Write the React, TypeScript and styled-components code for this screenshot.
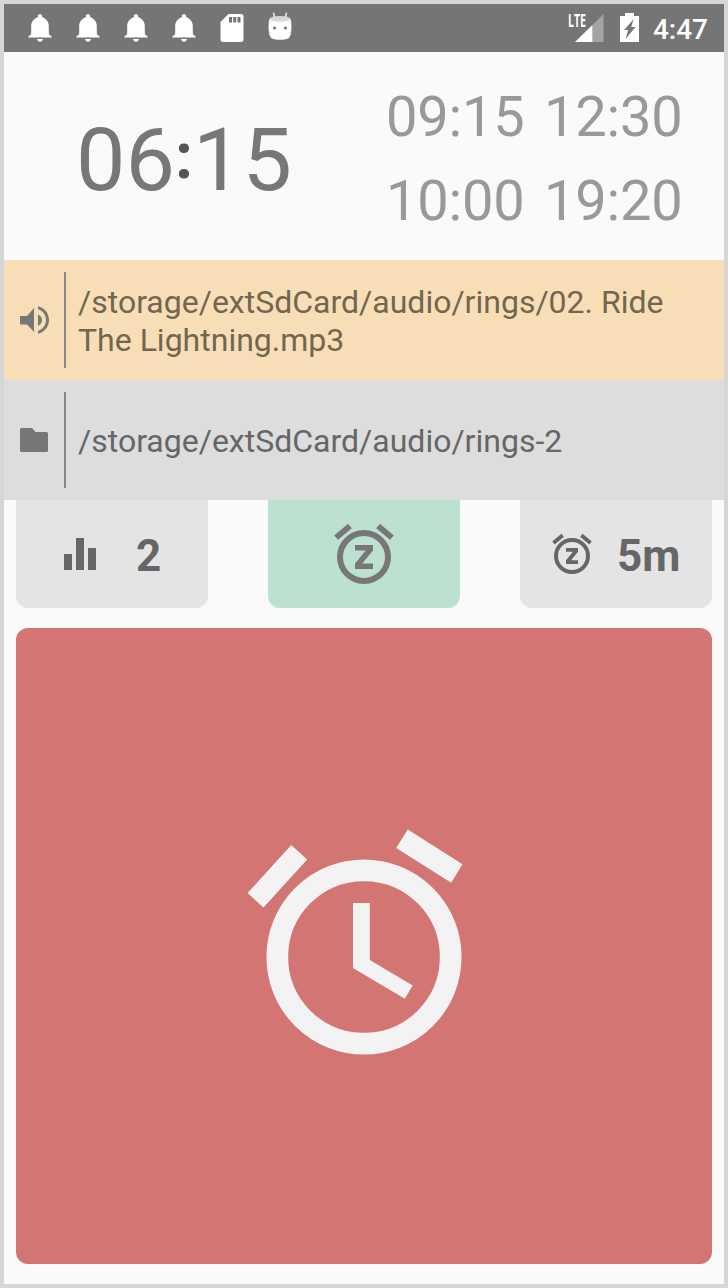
import React from 'react';
import styled, { createGlobalStyle } from 'styled-components';

const Global = createGlobalStyle`
  * { box-sizing: border-box; }
  body { margin: 0; background: #d6d6d6; font-family: Roboto, sans-serif; }
  svg { display: block; flex: none; }
`;

const Frame = styled.div`
  width: 728px;
  height: 1288px;
  border: 4px solid #d6d6d6;
  background: #fafafa;
  display: flex;
  flex-direction: column;
`;

const StatusBar = styled.header`
  height: 48px;
  background: #757575;
  color: #fff;
  display: flex;
  justify-content: space-between;
  padding: 0 16px 0 12px;
`;

const Notifications = styled.div`
  display: flex;
`;

const System = styled.div`
  display: flex;
`;

const StatusTime = styled.span`
  margin-left: 5px;
  font-size: 28px;
  font-weight: 500;
  line-height: 51px;
`;

const Times = styled.section`
  height: 208px;
  display: flex;
`;

const MainTime = styled.div`
  width: 360px;
  display: flex;
  justify-content: center;
  font-size: 88px;
  line-height: 216px;
  color: #777;
`;

const Colon = styled.span`
  font-size: 64px;
  font-weight: 700;
  line-height: 209px;
  color: #555;
`;

const OtherTimes = styled.div`
  display: grid;
  grid-template-columns: 158px 158px;
  grid-auto-rows: 84px;
  padding: 23px 0 0 22px;
  font-size: 56px;
  letter-spacing: -0.2px;
  line-height: 84px;
  color: #999;
`;

const PathRow = styled.div<{ $bg: string; $color: string }>`
  height: 120px;
  display: flex;
  align-items: center;
  background: ${(p) => p.$bg};
  color: ${(p) => p.$color};
`;

const Divider = styled.div`
  width: 2px;
  height: 96px;
  background: #888;
`;

const PathText = styled.div`
  flex: 1;
  padding: 2px 40px 0 12px;
  font-size: 32px;
  line-height: 38px;
`;

const Actions = styled.div`
  height: 108px;
  display: flex;
  justify-content: space-between;
  padding: 0 12px;
`;

const ActionButton = styled.button<{ $active?: boolean }>`
  width: 192px;
  height: 108px;
  padding: 0;
  border: 0;
  border-radius: 0 0 12px 12px;
  background: ${(p) => (p.$active ? '#bce1d0' : '#e4e4e4')};
  color: #666;
  display: flex;
  font-family: inherit;
`;

const ActionLabel = styled.span<{ $left: number }>`
  margin-left: ${(p) => p.$left}px;
  font-size: 44px;
  font-weight: 700;
  line-height: 113px;
`;

const AlarmPanel = styled.button`
  margin: 20px 12px 0;
  height: 636px;
  padding: 0;
  border: 0;
  border-radius: 12px;
  background: #d37573;
  display: flex;
`;

const Bell = () => (
  <svg width="48" height="48" viewBox="0 0 48 48" fill="#fff">
    <path d="M24 10c-1.300 0-2.100 1-2.100 2.100v1.200c-4 1.100-6.700 4.600-6.700 8.700v8.200l-2.800 2.300v1h23.200v-1l-2.800-2.300V22c0-4.100-2.700-7.600-6.700-8.700v-1.200C26.100 11 25.300 10 24 10zM21 35c.3 1.700 1.500 2.700 3 2.700s2.700-1 3-2.700z" />
  </svg>
);

const SdCard = () => (
  <svg width="48" height="48" viewBox="0 0 48 48">
    <path fill="#fff" d="M20.500 10H33c1.500 0 2.500 1 2.500 2.500v23c0 1.500-1 2.500-2.500 2.500H15c-1.500 0-2.500-1-2.500-2.500V18z" />
    <path fill="#757575" d="M21 13h3v5.500h-3zM25.200 13h3v5.500h-3zM29.500 13h3v5.500h-3z" />
  </svg>
);

const Robot = () => (
  <svg width="48" height="48" viewBox="0 0 48 48">
    <path d="M18.800 14.500l-1.300-5.800M29.200 14.500l1.300-5.800" stroke="#fff" strokeWidth="1.300" />
    <path fill="#fff" d="M13.500 15c-1.300 4-1.300 11 .2 16.500 .9 3 4 4.200 10.300 4.200s9.400-1.200 10.300-4.200c1.500-5.500 1.500-12.500 .2-16.500z" />
    <ellipse cx="24" cy="14.800" rx="10.300" ry="2.900" fill="#d8d8d8" />
    <circle cx="18.500" cy="24" r="1.500" fill="#757575" />
    <circle cx="29.500" cy="24" r="1.500" fill="#757575" />
  </svg>
);

const LteText = styled.text`
  font-family: "Open Sans", Roboto, sans-serif;
  font-size: 17px;
  font-weight: 700;
`;

const Signal = () => (
  <svg width="48" height="48" viewBox="0 0 48 48" fill="#fff">
    <path d="M39.500 10v28H11z" fill="#a3a3a3" />
    <path d="M28.300 21.300V38H11z" />
    <LteText x="4" y="22.500" textLength="18" lengthAdjust="spacingAndGlyphs">LTE</LteText>
  </svg>
);

const Battery = () => (
  <svg width="36" height="48" viewBox="-4 0 36 48">
    <path fill="#fff" d="M9 9h9v3h5v26H4V12h5z" />
    <path fill="#757575" d="M17.800 15l-9.800 11h4.200l-2.700 9 10-12h-4.300z" />
  </svg>
);

const Volume = () => (
  <svg width="60" height="96" viewBox="4 272 60 96" fill="#777">
    <path d="M20 316h7l7-8v24l-7-7.500h-7z" />
    <path d="M38 314.500c2.500 1 4 3 4 5.500s-1.500 4.700-4 6z" />
    <path d="M38 306.300c6.300 1.300 11 7 11 13.700s-4.700 12.400-11 13.700v-2.900c4.700-1.300 8-5.600 8-10.800s-3.300-9.500-8-10.800z" />
  </svg>
);

const Folder = () => (
  <svg width="60" height="96" viewBox="4 392 60 96" fill="#777">
    <path d="M21.500 428H32l3.500 4H46.500q1.500 0 1.500 1.500v17q0 1.500-1.500 1.500h-25q-1.500 0-1.500-1.500v-21q0-1.500 1.500-1.500z" />
  </svg>
);

const Bars = () => (
  <svg width="80" height="108" viewBox="0 0 80 108" fill="#666">
    <path d="M48 54h8v16h-8zM60 38h8v32h-8zM72 48h8v22h-8z" />
  </svg>
);

const SnoozeLarge = () => (
  <svg width="192" height="108" viewBox="0 0 192 108" fill="#777">
    <circle cx="96" cy="57" r="24" fill="none" stroke="#777" strokeWidth="6" />
    <path d="M66.200 35.500L80 23.800l3.800 4.500L70 39.800zM125.800 35.500L112 23.800l-3.800 4.500L122 39.800zM87 45h18v5.400L94.200 63.600H105V69H87v-5.400L97.800 50.400H87z" />
  </svg>
);

const SnoozeSmall = () => (
  <svg width="75" height="108" viewBox="0 0 75 108" fill="#666">
    <circle cx="52" cy="56" r="16" fill="none" stroke="#666" strokeWidth="4" />
    <path d="M32.200 41.600L41.500 33.800l2.400 2.900-9.300 7.800zM71.800 41.600L62.500 33.800l-2.400 2.900 9.300 7.800zM46 48h12v3.700L51 60.300h7V64H46v-3.700L53 51.700h-7z" />
  </svg>
);

const AlarmClock = () => (
  <svg width="696" height="636" viewBox="16 628 696 636" fill="#f3f3f3">
    <circle cx="364" cy="957" r="86.700" fill="none" stroke="#f3f3f3" strokeWidth="21.700" />
    <path d="M291.300 845L307.200 859.500 263.500 907.500 247.500 893zM407.800 829.500L462.500 864.200 451.200 882.700 396.200 848zM353 903H369.800V960L412.700 985.500 404.800 998.800 353 968z" />
  </svg>
);

export default function App() {
  return (
    <>
      <Global />
      <Frame>
        <StatusBar>
          <Notifications>
            <Bell />
            <Bell />
            <Bell />
            <Bell />
            <SdCard />
            <Robot />
          </Notifications>
          <System>
            <Signal />
            <Battery />
            <StatusTime>4:47</StatusTime>
          </System>
        </StatusBar>
        <Times>
          <MainTime>
            <span>06</span>
            <Colon>:</Colon>
            <span>15</span>
          </MainTime>
          <OtherTimes>
            <span>09:15</span>
            <span>12:30</span>
            <span>10:00</span>
            <span>19:20</span>
          </OtherTimes>
        </Times>
        <PathRow $bg="#f8deb7" $color="#73664f">
          <Volume />
          <Divider />
          <PathText>/storage/extSdCard/audio/rings/02. Ride The Lightning.mp3</PathText>
        </PathRow>
        <PathRow $bg="#dddddd" $color="#666">
          <Folder />
          <Divider />
          <PathText>/storage/extSdCard/audio/rings-2</PathText>
        </PathRow>
        <Actions>
          <ActionButton>
            <Bars />
            <ActionLabel $left={40}>2</ActionLabel>
          </ActionButton>
          <ActionButton $active>
            <SnoozeLarge />
          </ActionButton>
          <ActionButton>
            <SnoozeSmall />
            <ActionLabel $left={22}>5m</ActionLabel>
          </ActionButton>
        </Actions>
        <AlarmPanel>
          <AlarmClock />
        </AlarmPanel>
      </Frame>
    </>
  );
}
